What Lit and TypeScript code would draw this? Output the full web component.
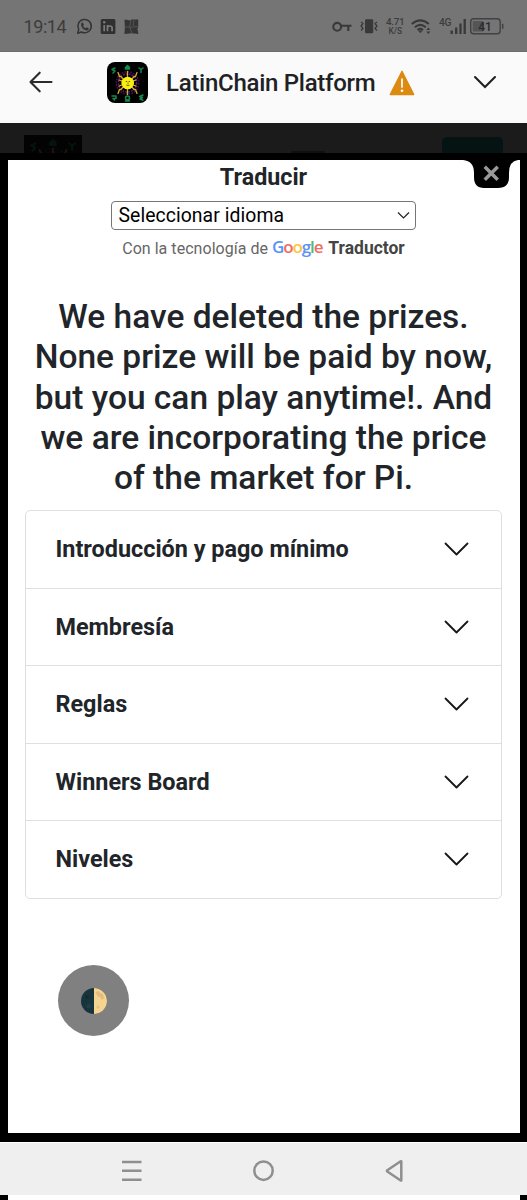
import { LitElement, html, css, svg } from "lit";
import { customElement } from "lit/decorators.js";

const emblem = svg`
  <g fill="none" stroke="#5c1d78" stroke-width="1.6" stroke-dasharray="1.8 1.1">
    <circle cx="20.5" cy="21" r="9"/><circle cx="20.5" cy="21" r="11.2" stroke="#3d1450"/>
  </g>
  <g fill="none" stroke="#d9a928" stroke-width="1.3" stroke-linecap="round" stroke-linejoin="round">
    <path d="M20.5 15V9.5M20.5 27v5.500M16 17l-2-2.500h-1.500l-1.500-4M25 17l2-2.500h1.500l1.500-4M16 25l-2 2.500h-1.500l-1.500 4M25 25l2 2.500h1.500l1.500 4M15 19l-3-1M26 19l3-1M15 23l-3 1M26 23l3 1"/>
  </g>
  <circle cx="20.700" cy="21" r="6.300" fill="#f7ee14"/>
  <path d="M18.800 19.500h1.400M21.600 19.500H23M19.400 23.300h3M21 20.500v1.300" stroke="#6b5b10" stroke-width="1" fill="none"/>
  <g fill="none" stroke="#128a4a" stroke-width="1.500" stroke-linecap="round" stroke-linejoin="round">
    <path d="M8 6l-3 1.500 3 1.500-2 2M18.500 5.500l2-2 2 2h-4v1.500h4M32 6l2 1.500 2-1.500M34 7.500v3"/>
    <path d="M5 34h4v2.500H6L7.500 38M18.500 36a2 2 0 1 1 4 0a2 2 0 1 1-4 0zM18.500 39h4M36 33l-3.500 1.500 3 1-2.500 1.500 3 1.300"/>
  </g>`;

@customElement("status-bar")
class StatusBar extends LitElement {
  static styles = css`
    :host { display: block; height: 52px; background: #757575; color: #414141; font-family: Roboto, sans-serif; }
    .bar { display: flex; height: 52px; }
    svg { display: block; width: 527px; height: 52px; }
    text { fill: #3c3c3c; }
  `;
  render() {
    return html`<div class="bar"><svg viewBox="0 0 527 52">
      <text x="23.500" y="33.200" font-size="18" letter-spacing=".3" textLength="43.500">19:14</text>
      <g fill="none" stroke="#353535" stroke-width="1.500" stroke-linejoin="round">
        <path d="M77.700 33.200l1-3.900a6.700 6.700 0 1 1 2.700 2.700z"/>
      </g>
      <path d="M81.500 22.700l1.300-.2 1.100 2.300-.8 1.100q1 1.700 2.600 2.300l1-1 2.100 1.100q0 1.800-1.900 2.100c-3.300 0-7-4-5.400-7.700z" fill="#353535"/>
      <rect x="100.700" y="19" width="14.700" height="15" rx="1.500" fill="#303030"/>
      <path d="M104.200 25v6.300M107.500 31.300V25M107.500 28q0-2 2.300-2t2.300 2.100v3.200" fill="none" stroke="#7b7b7b" stroke-width="1.700"/>
      <circle cx="104.200" cy="22.300" r="1.200" fill="#7b7b7b"/>
      <path d="M124.500 19.500l6.500 1v-1h7.200v8l-.8 1 1 5.500-7-.8-7 .8.500-6z" fill="#353535"/>
      <path d="M124.500 26.700l6.500.6 7-1M131 20.500l-1.400 6.500 2.300 6M134 20l-1 6" fill="none" stroke="#5b5b5b" stroke-width=".8"/>

      <g fill="none" stroke="#393939" stroke-width="2.100">
        <circle cx="337.200" cy="26.800" r="3.900"/><path d="M341 25.800h10.500M348.300 26v5"/>
      </g>
      <rect x="365" y="19.300" width="8.200" height="14" rx="1.200" fill="#393939"/>
      <path d="M361 22l2 1.500-2 2.500 2 2.500-2 2M377 22l-2 1.500 2 2.500-2 2.500 2 2" fill="none" stroke="#393939" stroke-width="1.300"/>
      <text x="386" y="25" font-size="9.900" font-weight="500" textLength="18.500">4.71</text>
      <text x="388.500" y="34" font-size="8.400" font-weight="500" textLength="13.500">K/S</text>
      <g fill="none" stroke="#393939" stroke-width="2">
        <path d="M411.800 24q8.500-7.200 17 0M414.800 27.200q5.500-4.600 11 0M417.500 30q2.800-2.200 5.600 0"/>
      </g>
      <path d="M418 30.500h4.600l-2.300 2.700zM426.300 30l2-2.500 2 2.500zM426.300 31.500l2 2.500 2-2.500z" fill="#393939"/>
      <text x="439" y="26" font-size="10.200" font-weight="500" textLength="12.500">4G</text>
      <path d="M451.700 30.500V34M456.200 27.500V34M460.500 23.500V34M464.700 19V34" stroke="#393939" stroke-width="2.300"/>
      <rect x="470.700" y="18.700" width="29.500" height="15" rx="3" fill="none" stroke="#414141" stroke-width="1.400"/>
      <rect x="472.700" y="21" width="10.500" height="10.500" rx="1" fill="#555"/>
      <path d="M502.700 23.800v5" stroke="#414141" stroke-width="1.500"/>
      <text x="478.300" y="30.700" font-size="12" font-weight="500" textLength="13.500" style="fill:#2b2b2b">41</text>
      <path d="M0 51.700h527" stroke="#666" stroke-width=".6"/>
    </svg></div>`;
  }
}

@customElement("app-header")
class AppHeader extends LitElement {
  static styles = css`
    :host { display: block; height: 71px; background: #fafafa; }
    .bar { display: flex; align-items: center; height: 61px; padding: 0 31px 0 29px; }
    .back { width: 24px; height: 22px; margin-right: 54px; position: relative; top: -1px; }
    .logo { width: 41px; height: 41px; border-radius: 8px; background: #000; margin-right: 18px; }
    .title { font: 500 24px/30px Roboto, sans-serif; color: #202124; letter-spacing: -0.270px; white-space: nowrap; width: 209px; padding-top: 1px; }
    .warn { width: 26px; height: 26px; margin-left: 14px; margin-right: auto; }
    .down { width: 24px; height: 14px; position: relative; top: -1px; left: 0.5px; }
    svg { display: block; flex: none; }
  `;
  render() {
    return html`<div class="bar">
      <svg class="back" viewBox="0 0 24 22"><path d="M22.500 11H1.700M10.700 1.700L1.500 11l9.200 9.300" fill="none" stroke="#2b2b2b" stroke-width="2.100" stroke-linecap="round" stroke-linejoin="round"/></svg>
      <svg class="logo" viewBox="0 0 41 41">${emblem}</svg>
      <div class="title">LatinChain Platform</div>
      <svg class="warn" viewBox="0 0 26 26"><path d="M13 1.300L24.800 24.500H1.200z" fill="#dc8a10" stroke="#dc8a10" stroke-width="1.300" stroke-linejoin="round"/><path d="M13 9v8" stroke="#fff" stroke-width="1.700" stroke-linecap="round"/><circle cx="13" cy="20.700" r="1.300" fill="#fff"/></svg>
      <svg class="down" viewBox="0 0 24 14"><path d="M2 2l10 10L22 2" fill="none" stroke="#202020" stroke-width="2.100" stroke-linecap="round"/></svg>
    </div>`;
  }
}

@customElement("app-root")
class AppRoot extends LitElement {
  static styles = css`
    :host { display: block; width: 527px; height: 1200px; overflow: hidden; background: #000; font-family: Roboto, sans-serif; color: #212529; }
    .shade { display: flex; align-items: flex-end; height: 30px; background: #1b1b1b; padding: 0 24px; box-sizing: border-box; }
    .shade-logo { width: 58px; height: 18px; background: #030303; }
    .shade-logo svg { display: block; opacity: 0.12; }
    .shade-line { width: 34px; height: 2px; margin-left: 209px; background: #101010; }
    .shade-button { width: 61px; height: 16px; margin-left: auto; border-radius: 5px 5px 0 0; background: #051312; }
    .modal { position: relative; height: 973px; margin: 7px 7.500px 0; background: #fff; text-align: center; display: flex; flex-direction: column; align-items: center; }
    .close { position: absolute; top: 0; right: -0.500px; width: 58px; height: 28px; }
    .translate { font-size: 23.300px; font-weight: 700; line-height: 34px; height: 41px; white-space: nowrap; }
    .select { display: flex; align-items: center; justify-content: space-between; box-sizing: border-box; width: 305px; height: 29px; border: 1.400px solid #767676; border-radius: 4px; padding: 0 5px 1px 6.500px; color: #000; font-size: 19.400px; letter-spacing: 0.06px; }
    .powered { display: flex; align-items: baseline; margin-top: 3px; height: 31px; line-height: 30px; font-size: 16px; color: #666; white-space: nowrap; }
    .powered > span:first-child { letter-spacing: 0.040px; }
    .google { font: 600 17px/26px "Open Sans", sans-serif; letter-spacing: -1.150px; margin: 0 6px 0 4px; position: relative; top: -1px; }
    .b { color: #5b94f5; } .r { color: #ee6c61; } .y { color: #fbc640; } .g { color: #58b673; }
    .powered strong { color: #444; font-size: 17.500px; }
    .notice { margin: 33px 0 0; width: 476px; height: 201.500px; font-size: 33.500px; line-height: 40.250px; font-weight: 500; white-space: pre-line; }
    .list { width: 477px; box-sizing: border-box; margin-top: 11.500px; border: 1.400px solid #dedfe0; border-radius: 5px; }
    .row { display: flex; align-items: center; justify-content: space-between; height: 76.500px; padding: 0 32px 0 29.500px; border-bottom: 1px solid #dedfe0; font-size: 23.400px; font-weight: 700; }
    .row:last-child { border-bottom: 0; }
    .row svg { display: block; }
    .moon { align-self: flex-start; display: flex; align-items: center; justify-content: center; width: 71px; height: 71px; margin: 66.500px 0 0 50.500px; border-radius: 50%; background: #808080; }
    .nav { margin-top: 8.500px; height: 53px; background: #efefef; display: flex; }
    .nav svg { display: block; }
    .tail { height: 6px; margin: 0 7.500px; background: #fff; }
  `;
  sections = ["Introducción y pago mínimo", "Membresía", "Reglas", "Winners Board", "Niveles"];
  render() {
    return html`
      <status-bar></status-bar>
      <app-header></app-header>
      <div class="shade">
        <div class="shade-logo"><svg width="58" height="18" viewBox="0 0 41 12.700">${emblem}</svg></div>
        <div class="shade-line"></div>
        <div class="shade-button"></div>
      </div>
      <div class="modal">
        <svg class="close" viewBox="0 0 58 28"><path d="M1 0Q12 1 12 13v4q0 11 10 11h14q11 0 11-11v-4Q47 1 56 0z" fill="#000"/><path d="M24 8l10.500 10.500M34.500 8L24 18.500" stroke="#999" stroke-width="3.500" stroke-linecap="square"/></svg>
        <div class="translate">Traducir</div>
        <div class="select"><span>Seleccionar idioma</span><svg width="13" height="9" viewBox="0 0 13 9"><path d="M1 1.500l5.500 5.500L12 1.500" fill="none" stroke="#222" stroke-width="1.200"/></svg></div>
        <div class="powered"><span>Con la tecnología de</span><span class="google"><span class="b">G</span><span class="r">o</span><span class="y">o</span><span class="b">g</span><span class="g">l</span><span class="r">e</span></span><strong>Traductor</strong></div>
        <h2 class="notice">${"We have deleted the prizes.\nNone prize will be paid by now,\nbut you can play anytime!. And\nwe are incorporating the price\nof the market for Pi."}</h2>
        <div class="list">
          ${this.sections.map((s) => html`<div class="row"><span>${s}</span><svg width="25" height="14" viewBox="0 0 25 14"><path d="M1.500 1.500l11 11 11-11" fill="none" stroke="#151719" stroke-width="1.800" stroke-linecap="round" stroke-linejoin="round"/></svg></div>`)}
        </div>
        <div class="moon"><svg width="26" height="26" viewBox="0 0 26 26">
          <circle cx="13" cy="13" r="13" fill="#17343d"/><path d="M13 0a13 13 0 0 1 0 26z" fill="#f5d491"/>
          <path d="M14.500 4.500l2-1.500 3 2 2.500 1 1 4-2 2-2-3-2.500-1z" fill="#dcb676" opacity=".75"/><circle cx="17" cy="19" r="1.500" fill="#e7c27f"/><circle cx="6" cy="9" r="2" fill="#102b34"/><circle cx="8" cy="18" r="2.500" fill="#1d3e47"/>
        </svg></div>
      </div>
      <div class="nav"><svg width="527" height="53" viewBox="0 0 527 53">
        <path d="M0 .5h527" stroke="#fff" stroke-width="1"/>
        <g fill="none" stroke="#8f8f8f" stroke-width="2.500">
          <path d="M122 20h19.500M122 28.800h19.500M122 37.700h19.500"/>
          <circle cx="263.500" cy="28.700" r="9.200"/>
          <path d="M401.300 19.500v18.700q0 .6-.6.300L387.300 29.500q-.8-.6 0-1.200l13.400-9q.6-.4.600.2z" stroke-linejoin="round"/>
        </g>
      </svg></div>
      <div class="tail"></div>`;
  }
}
